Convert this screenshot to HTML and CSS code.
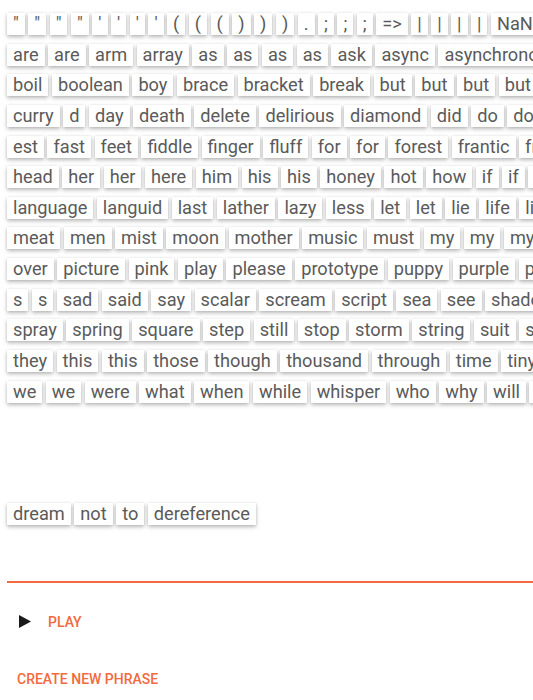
FILE: index.html
```html
<!DOCTYPE html>
<html>
<head>
<meta charset="utf-8">
<link rel="stylesheet" href="styles.css">
</head>
<body>
<div class="app">
  <div class="board">
    <div class="row"><span class="tile">"</span><span class="tile">"</span><span class="tile">"</span><span class="tile">"</span><span class="tile">'</span><span class="tile">'</span><span class="tile">'</span><span class="tile">'</span><span class="tile">(</span><span class="tile">(</span><span class="tile">(</span><span class="tile">)</span><span class="tile">)</span><span class="tile">)</span><span class="tile">.</span><span class="tile">;</span><span class="tile">;</span><span class="tile">;</span><span class="tile">=&gt;</span><span class="tile">|</span><span class="tile">|</span><span class="tile">|</span><span class="tile">|</span><span class="tile">NaN</span><span class="tile">null</span></div>
    <div class="row"><span class="tile">are</span><span class="tile">are</span><span class="tile">arm</span><span class="tile">array</span><span class="tile">as</span><span class="tile">as</span><span class="tile">as</span><span class="tile">as</span><span class="tile">ask</span><span class="tile">async</span><span class="tile">asynchronous</span></div>
    <div class="row"><span class="tile">boil</span><span class="tile">boolean</span><span class="tile">boy</span><span class="tile">brace</span><span class="tile">bracket</span><span class="tile">break</span><span class="tile">but</span><span class="tile">but</span><span class="tile">but</span><span class="tile">but</span><span class="tile">by</span></div>
    <div class="row"><span class="tile">curry</span><span class="tile">d</span><span class="tile">day</span><span class="tile">death</span><span class="tile">delete</span><span class="tile">delirious</span><span class="tile">diamond</span><span class="tile">did</span><span class="tile">do</span><span class="tile">dog</span></div>
    <div class="row"><span class="tile">est</span><span class="tile">fast</span><span class="tile">feet</span><span class="tile">fiddle</span><span class="tile">finger</span><span class="tile">fluff</span><span class="tile">for</span><span class="tile">for</span><span class="tile">forest</span><span class="tile">frantic</span><span class="tile">from</span></div>
    <div class="row"><span class="tile">head</span><span class="tile">her</span><span class="tile">her</span><span class="tile">here</span><span class="tile">him</span><span class="tile">his</span><span class="tile">his</span><span class="tile">honey</span><span class="tile">hot</span><span class="tile">how</span><span class="tile">if</span><span class="tile">if</span><span class="tile">in</span></div>
    <div class="row"><span class="tile">language</span><span class="tile">languid</span><span class="tile">last</span><span class="tile">lather</span><span class="tile">lazy</span><span class="tile">less</span><span class="tile">let</span><span class="tile">let</span><span class="tile">lie</span><span class="tile">life</span><span class="tile">like</span></div>
    <div class="row"><span class="tile">meat</span><span class="tile">men</span><span class="tile">mist</span><span class="tile">moon</span><span class="tile">mother</span><span class="tile">music</span><span class="tile">must</span><span class="tile">my</span><span class="tile">my</span><span class="tile">my</span></div>
    <div class="row"><span class="tile">over</span><span class="tile">picture</span><span class="tile">pink</span><span class="tile">play</span><span class="tile">please</span><span class="tile">prototype</span><span class="tile">puppy</span><span class="tile">purple</span><span class="tile">put</span></div>
    <div class="row"><span class="tile">s</span><span class="tile">s</span><span class="tile">sad</span><span class="tile">said</span><span class="tile">say</span><span class="tile">scalar</span><span class="tile">scream</span><span class="tile">script</span><span class="tile">sea</span><span class="tile">see</span><span class="tile">shadow</span></div>
    <div class="row"><span class="tile">spray</span><span class="tile">spring</span><span class="tile">square</span><span class="tile">step</span><span class="tile">still</span><span class="tile">stop</span><span class="tile">storm</span><span class="tile">string</span><span class="tile">suit</span><span class="tile">summer</span></div>
    <div class="row"><span class="tile">they</span><span class="tile">this</span><span class="tile">this</span><span class="tile">those</span><span class="tile">though</span><span class="tile">thousand</span><span class="tile">through</span><span class="tile">time</span><span class="tile">tiny</span></div>
    <div class="row"><span class="tile">we</span><span class="tile">we</span><span class="tile">were</span><span class="tile">what</span><span class="tile">when</span><span class="tile">while</span><span class="tile">whisper</span><span class="tile">who</span><span class="tile">why</span><span class="tile">will</span><span class="tile">wind</span></div>
  </div>

  <div class="phrase">
    <div class="row"><span class="tile">dream</span><span class="tile">not</span><span class="tile">to</span><span class="tile">dereference</span></div>
  </div>

  <div class="divider"></div>

  <div class="actions">
    <button class="btn play-btn" type="button">
      <svg class="play-icon" width="12" height="13" viewBox="0 0 12 13"><polygon points="0,0 12,6.5 0,13" fill="#1a1a1a"/></svg>
      <span>PLAY</span>
    </button>
    <button class="btn create-btn" type="button">CREATE NEW PHRASE</button>
  </div>
</div>
</body>
</html>
```

FILE: styles.css
```css
html, body {
  margin: 0;
  padding: 0;
  background: #ffffff;
  overflow: hidden;
}

.app {
  font-family: Roboto, "Noto Sans", sans-serif;
  width: 533px;
  overflow: hidden;
}

.board {
  display: flex;
  flex-direction: column;
  gap: 8.65px;
  padding: 13px 0 0 7px;
}

.row {
  display: flex;
  gap: 3.5px;
  white-space: nowrap;
}

.tile {
  flex-shrink: 0;
  display: block;
  background: #ffffff;
  color: #5a5a5a;
  font-size: 18.2px;
  line-height: 22px;
  height: 22px;
  padding: 0 6px;
  box-shadow: 0 2px 4px rgba(0, 0, 0, 0.28), 0 0 2px rgba(0, 0, 0, 0.08);
}

.phrase {
  padding: 100px 0 0 7px;
}

.divider {
  margin: 56px 0 0 7px;
  height: 2px;
  width: 600px;
  background: #f26a3e;
}

.actions {
  display: flex;
  flex-direction: column;
  align-items: flex-start;
}

.btn {
  background: none;
  border: 0;
  font-family: Roboto, "Noto Sans", sans-serif;
  font-weight: 500;
  font-size: 14px;
  color: #f26a3e;
  letter-spacing: 0;
  padding: 0;
  display: flex;
  align-items: center;
}

.play-btn {
  margin: 31px 0 0 19px;
  gap: 17px;
  height: 16px;
}

.play-icon {
  display: block;
}

.create-btn {
  margin: 41px 0 0 17px;
  height: 16px;
}
```
